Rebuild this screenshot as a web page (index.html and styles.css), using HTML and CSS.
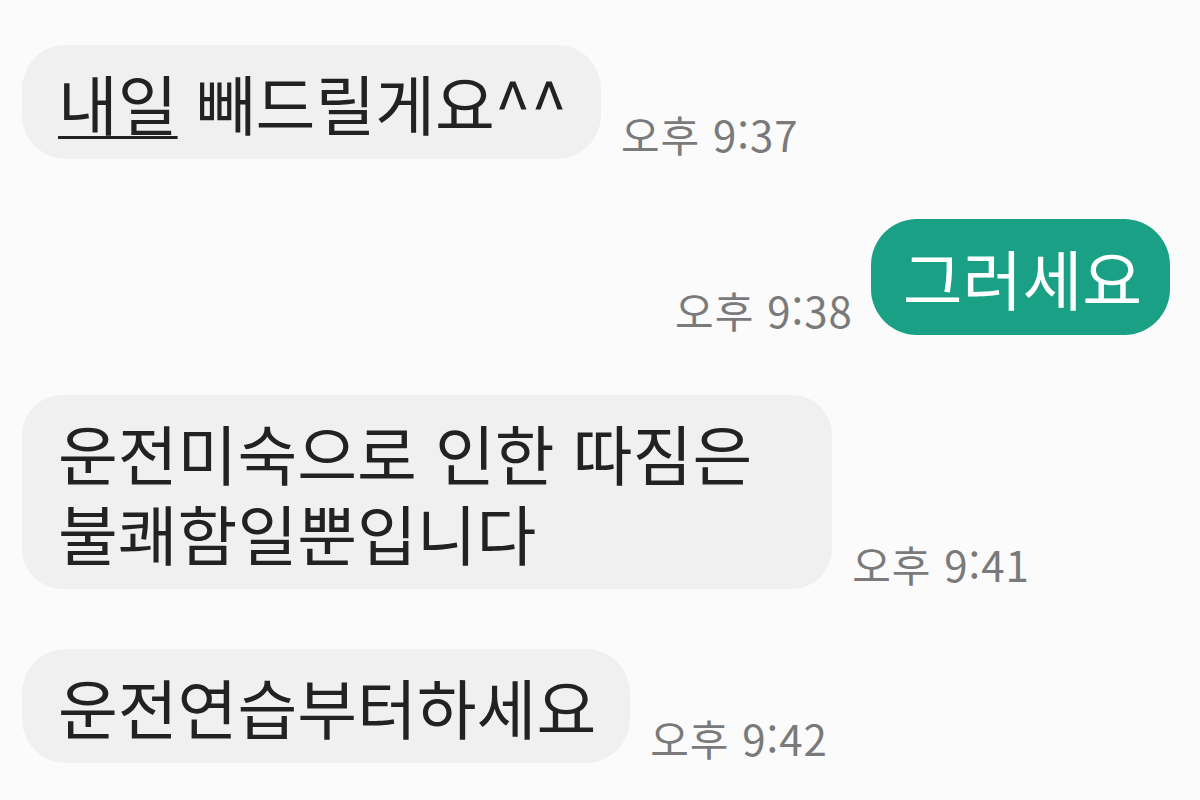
FILE: index.html
```html
<!DOCTYPE html>
<html lang="ko">

<head>
    <title>채팅</title>
    <meta charset="UTF-8" />
    <link rel="stylesheet" href="styles.css">
</head>

<body>
    <div class="chat">
        <div class="row">
            <div class="bubble"><u>내일</u> 빼드릴게요^^</div>
            <span class="time">오후 9:37</span>
        </div>
        <div class="row mine">
            <span class="time">오후 9:38</span>
            <div class="bubble">그러세요</div>
        </div>
        <div class="row">
            <div class="bubble wide">
                <div>운전미숙으로 인한 따짐은</div>
                <div>불쾌함일뿐입니다</div>
            </div>
            <span class="time">오후 9:41</span>
        </div>
        <div class="row">
            <div class="bubble">운전연습부터하세요</div>
            <span class="time">오후 9:42</span>
        </div>
    </div>
</body>

</html>
```

FILE: styles.css
```css
body {
    margin: 0;
    padding: 0;
    background-color: #fbfbfb;
    font-family: "Noto Sans CJK KR", "Noto Sans", sans-serif;
    color: #222;
}

.chat {
    display: flex;
    flex-direction: column;
    gap: 60px;
    padding: 45px 30px 0 22px;
}

.row {
    display: flex;
    align-items: flex-end;
    gap: 20px;
}

.row.mine {
    justify-content: flex-end;
    gap: 18px;
}

.bubble {
    background-color: #f0f0f0;
    font-size: 65px;
    line-height: 80px;
    padding: 17px 34px 17px 36px;
    border-radius: 44px;
}

.bubble.wide {
    padding-right: 80px;
    border-radius: 40px;
}

.bubble u {
    text-decoration-thickness: 3px;
    text-underline-offset: 6px;
}

.mine .bubble {
    background-color: #19a085;
    color: #fff;
    padding: 18px 28px 18px 32px;
    border-radius: 46px;
}

.time {
    font-size: 42px;
    line-height: 50px;
    color: #7a7a7a;
    letter-spacing: 1px;
}
```
